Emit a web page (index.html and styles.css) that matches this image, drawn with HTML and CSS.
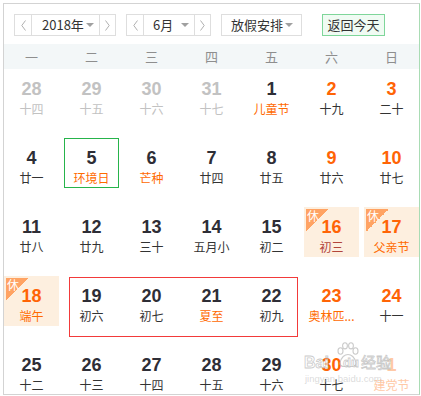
FILE: index.html
```html
<!DOCTYPE html>
<html lang="zh">
<head>
<meta charset="utf-8">
<link rel="stylesheet" href="styles.css">
</head>
<body>
<div class="cal">
  <div class="toolbar">
    <div class="ctl year">
      <span class="arrow prev"><svg width="5" height="11" viewBox="0 0 5 11"><path d="M4.5 0.5 L0.8 5.5 L4.5 10.5" fill="none" stroke="#b0b0b0" stroke-width="1"/></svg></span>
      <span class="mid"><span>2018年</span><i class="tri"></i></span>
      <span class="arrow next"><svg width="5" height="11" viewBox="0 0 5 11"><path d="M0.5 0.5 L4.2 5.5 L0.5 10.5" fill="none" stroke="#b0b0b0" stroke-width="1"/></svg></span>
    </div>
    <div class="ctl month">
      <span class="arrow prev"><svg width="5" height="11" viewBox="0 0 5 11"><path d="M4.5 0.5 L0.8 5.5 L4.5 10.5" fill="none" stroke="#b0b0b0" stroke-width="1"/></svg></span>
      <span class="mid"><span>6月</span><i class="tri"></i></span>
      <span class="arrow next"><svg width="5" height="11" viewBox="0 0 5 11"><path d="M0.5 0.5 L4.2 5.5 L0.5 10.5" fill="none" stroke="#b0b0b0" stroke-width="1"/></svg></span>
    </div>
    <div class="ctl holiday"><span>放假安排</span><i class="tri"></i></div>
    <div class="today-btn">返回今天</div>
  </div>
  <div class="week">
    <span>一</span><span>二</span><span>三</span><span>四</span><span>五</span><span>六</span><span>日</span>
  </div>
  <div class="grid">
    <div class="cell other"><b>28</b><em>十四</em></div>
    <div class="cell other"><b>29</b><em>十五</em></div>
    <div class="cell other"><b>30</b><em>十六</em></div>
    <div class="cell other"><b>31</b><em>十七</em></div>
    <div class="cell"><b>1</b><em class="fest">儿童节</em></div>
    <div class="cell wkend"><b>2</b><em>十九</em></div>
    <div class="cell wkend"><b>3</b><em>二十</em></div>

    <div class="cell"><b>4</b><em>廿一</em></div>
    <div class="cell today"><b>5</b><em class="fest">环境日</em></div>
    <div class="cell"><b>6</b><em class="fest">芒种</em></div>
    <div class="cell"><b>7</b><em>廿四</em></div>
    <div class="cell"><b>8</b><em>廿五</em></div>
    <div class="cell wkend"><b>9</b><em>廿六</em></div>
    <div class="cell wkend"><b>10</b><em>廿七</em></div>

    <div class="cell"><b>11</b><em>廿八</em></div>
    <div class="cell"><b>12</b><em>廿九</em></div>
    <div class="cell"><b>13</b><em>三十</em></div>
    <div class="cell"><b>14</b><em>五月小</em></div>
    <div class="cell"><b>15</b><em>初二</em></div>
    <div class="cell wkend rest"><span class="badge">休</span><b>16</b><em class="rest-lunar">初三</em></div>
    <div class="cell wkend rest"><span class="badge">休</span><b>17</b><em class="fest">父亲节</em></div>

    <div class="cell wkend rest"><span class="badge">休</span><b>18</b><em class="fest">端午</em></div>
    <div class="cell"><b>19</b><em>初六</em></div>
    <div class="cell"><b>20</b><em>初七</em></div>
    <div class="cell"><b>21</b><em class="fest">夏至</em></div>
    <div class="cell"><b>22</b><em>初九</em></div>
    <div class="cell wkend"><b>23</b><em class="fest clip">奥林匹...</em></div>
    <div class="cell wkend"><b>24</b><em>十一</em></div>

    <div class="cell"><b>25</b><em>十二</em></div>
    <div class="cell"><b>26</b><em>十三</em></div>
    <div class="cell"><b>27</b><em>十四</em></div>
    <div class="cell"><b>28</b><em>十五</em></div>
    <div class="cell"><b>29</b><em>十六</em></div>
    <div class="cell wkend"><b>30</b><em>十七</em></div>
    <div class="cell next-month"><b>1</b><em>建党节</em></div>
  </div>
  <div class="mark"></div>
  <div class="watermark">
    <span class="wm-bai">Bai</span>
    <svg class="paw" width="22" height="26" viewBox="0 0 22 26"><g fill="rgba(255,255,255,0.5)" stroke="rgba(185,185,185,0.75)" stroke-width="1.1"><ellipse cx="3.5" cy="9" rx="2.5" ry="3.2"/><ellipse cx="8" cy="3.8" rx="2.4" ry="3.1"/><ellipse cx="14" cy="3.8" rx="2.4" ry="3.1"/><ellipse cx="18.5" cy="9" rx="2.5" ry="3.2"/><path d="M3 21 C4 15 8 12.5 11 12.5 C14 12.5 18 15 19 21 C19 25 15 25 11 24 C7 25 3 25 3 21 Z"/></g></svg>
    <span class="wm-du">du</span>
    <span class="wm-jy">经验</span>
    <span class="wm-url">jingyan.baidu.com</span>
  </div>
</div>
</body>
</html>
```

FILE: styles.css
```css
* { box-sizing: border-box; }
html, body { margin: 0; padding: 0; background: #fff; }
body { font-family: "Liberation Sans", Arial, "Noto Sans CJK SC", sans-serif; }

.cal {
  position: relative;
  margin: 3px 0 0 3px;
  width: 417px;
  height: 392px;
  border: 1px solid #d3d3d3;
  border-right-color: #a9dcb4;
  overflow: hidden;
}

.toolbar {
  display: flex;
  align-items: center;
  height: 40px;
  padding: 10px 0 8px 10px;
  font-family: "Noto Sans CJK SC", sans-serif;
  font-size: 13px;
  color: #333;
}
.ctl {
  display: flex;
  align-items: stretch;
  height: 22px;
  border: 1px solid #dedede;
  background: #fff;
}
.year { width: 102px; margin-right: 10px; }
.month { width: 85px; margin-right: 10px; }
.arrow {
  display: flex;
  align-items: center;
  justify-content: center;
  width: 16px;
}
.arrow.prev { border-right: 1px solid #dedede; width: 17px; }
.arrow.next { border-left: 1px solid #dedede; width: 16px; }
.mid {
  flex: 1;
  display: flex;
  align-items: center;
  justify-content: space-between;
  padding: 0 5px 0 10px;
  line-height: 20px;
}
.month .mid { padding-left: 9px; }
.tri {
  display: block;
  width: 0;
  height: 0;
  border-left: 4px solid transparent;
  border-right: 4px solid transparent;
  border-top: 4px solid #a0a0a0;
}
.holiday {
  width: 81px;
  align-items: center;
  justify-content: space-between;
  padding: 0 8px 0 9px;
  margin-right: 20px;
  line-height: 20px;
}
.today-btn {
  width: 63px;
  height: 22px;
  border: 1px solid #7fd69a;
  background: #f0fbf3;
  text-align: center;
  line-height: 20px;
}

.week {
  display: grid;
  grid-template-columns: repeat(7, 55px);
  column-gap: 5px;
  height: 25px;
  background: #f3f7f8;
  font-family: "Noto Sans CJK SC", sans-serif;
  font-size: 13px;
  line-height: 25px;
  color: #8e8e8e;
  text-align: center;
}

.grid {
  display: grid;
  grid-template-columns: repeat(7, 55px);
  grid-auto-rows: 50px;
  column-gap: 5px;
  row-gap: 19px;
}
.cell {
  position: relative;
  text-align: center;
  padding-top: 10px;
}
.cell b {
  display: block;
  font-family: "Liberation Sans", Arial, sans-serif;
  font-weight: bold;
  font-size: 18px;
  line-height: 20px;
  color: #2e2e36;
}
.cell em {
  display: block;
  font-style: normal;
  font-family: "Noto Sans CJK SC", sans-serif;
  font-size: 12px;
  line-height: 16px;
  margin-top: 2px;
  color: #333;
  white-space: nowrap;
}
.cell.other b, .cell.other em { color: #c2c2c2; }
.cell.wkend b { color: #ff6405; }
.cell em.fest { color: #ff6a00; }
.cell em.rest-lunar { color: #b2453a; }
.cell.next-month b, .cell.next-month em { color: #ffc9a6; }

.cell.today { border: 1px solid #26b44b; padding-top: 9px; }
.cell.rest { background: #fdefdf; }
.badge {
  position: absolute;
  left: 2px;
  top: 2px;
  width: 23px;
  height: 23px;
  background: linear-gradient(to bottom right, #ffa363 50%, transparent 50%);
  color: #fff;
  font-family: "Noto Sans CJK SC", sans-serif;
  font-size: 12px;
  line-height: 13px;
  text-align: left;
  padding-left: 1px;
}

.mark {
  position: absolute;
  left: 65px;
  top: 273px;
  width: 229px;
  height: 60px;
  border: 1px solid #f23a3a;
}

.watermark {
  position: absolute;
  left: 298px;
  top: 336px;
  width: 100px;
  height: 46px;
  pointer-events: none;
}
.watermark > * { position: absolute; }
.wm-bai, .wm-du {
  font-family: "Liberation Sans", Arial, sans-serif;
  font-weight: bold;
  font-size: 16px;
  line-height: 18px;
  color: rgba(255, 255, 255, 0.6);
  -webkit-text-stroke: 0.8px rgba(185, 185, 185, 0.75);
}
.wm-bai { left: 2px; top: 14px; }
.paw { left: 35px; top: 2px; }
.wm-du { left: 41px; top: 14px; font-size: 13px; }
.wm-jy {
  left: 59px;
  top: 12px;
  font-family: "Noto Sans CJK SC", sans-serif;
  font-size: 15px;
  line-height: 20px;
  color: rgba(255, 255, 255, 0.6);
  -webkit-text-stroke: 0.8px rgba(185, 185, 185, 0.75);
}
.wm-url {
  left: 3px;
  top: 33px;
  font-family: "Liberation Sans", Arial, sans-serif;
  font-size: 9.5px;
  line-height: 11px;
  color: rgba(190, 190, 190, 0.55);
  white-space: nowrap;
}
```
